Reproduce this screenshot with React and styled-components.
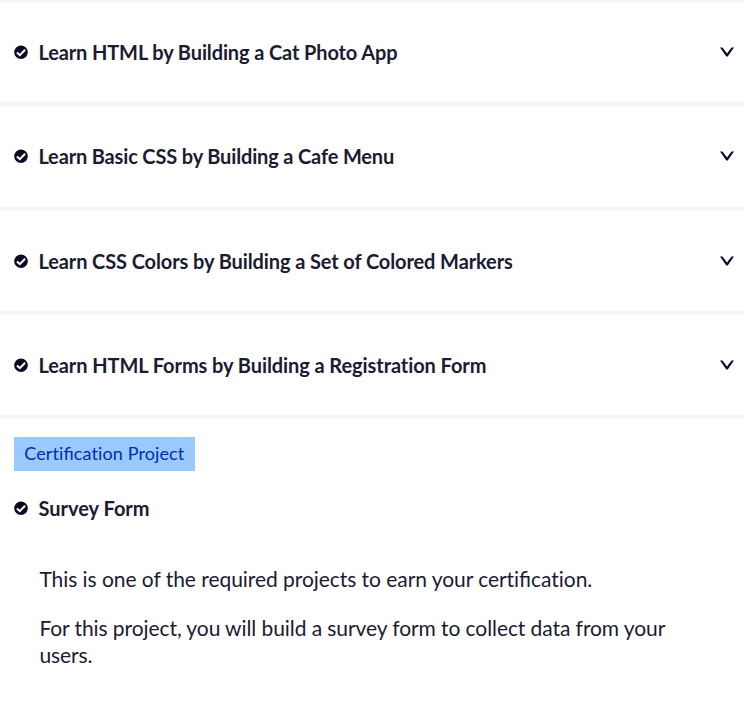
import React from "react";
import styled, { createGlobalStyle } from "styled-components";

const GlobalStyle = createGlobalStyle`
  * { box-sizing: border-box; }
  body { margin: 0; background: #f5f6f7; color: #1b1b32; font-family: Lato, sans-serif; }
`;

const Map = styled.main`
  display: flex;
  flex-direction: column;
  gap: 4px;
  padding-top: 2px;
  height: 706px;
  overflow: hidden;
`;

const Block = styled.section`
  display: flex;
  align-items: center;
  flex: 0 0 ${(p) => p.$height}px;
  padding: 0 10px ${(p) => p.$height - 100}px 14px;
  background: #fff;
`;

const Title = styled.h3`
  flex: 1;
  margin: 0 0 0 10.4px;
  font-size: 20px;
  line-height: 28px;
  font-weight: 700;
  font-variant-ligatures: none;
  letter-spacing: ${(p) => p.$spacing || 0}px;
  white-space: nowrap;
`;

const Project = styled.section`
  flex: 1;
  padding: 18px 14px 0;
  background: #fff;
`;

const Badge = styled.div`
  width: 181px;
  height: 34px;
  padding-left: 10.3px;
  background: #99c9ff;
  color: #002ead;
  font-size: 18px;
  line-height: 33px;
  letter-spacing: 0.11px;
  white-space: nowrap;
`;

const ProjectHeading = styled.div`
  display: flex;
  align-items: center;
  margin-top: 23px;
`;

const Description = styled.div`
  margin: 43px 0 0 25.4px;
  font-size: 21px;
  line-height: 27px;
`;

const Paragraph = styled.p`
  width: 650px;
  margin: 0 0 22px;
  letter-spacing: ${(p) => p.$spacing}px;
`;

const Ligature = styled.span`
  letter-spacing: 0;
`;

const Icon = styled.svg`
  display: block;
  flex: none;
`;

const ToggleIcon = styled(Icon)`
  margin-bottom: 1px;
`;

function Check() {
  return (
    <Icon width="14" height="14" viewBox="0 0 14 14">
      <circle cx="7" cy="7.2" r="6.8" fill="#0a0a23" />
      <path d="M2.9 7.5 5.8 10.1 11.1 4.7" fill="none" stroke="#fff" strokeWidth="2" />
    </Icon>
  );
}

function Chevron() {
  return (
    <ToggleIcon width="14" height="10" viewBox="0 0 14 10">
      <path d="M0 .5h2.5L7 6.5 11.5.5H14L7.7 9.5H6.3z" fill="#0a0a23" />
    </ToggleIcon>
  );
}

const blocks = [
  { title: "Learn HTML by Building a Cat Photo App", height: 100, spacing: -0.125 },
  { title: "Learn Basic CSS by Building a Cafe Menu", height: 101, spacing: -0.155 },
  { title: "Learn CSS Colors by Building a Set of Colored Markers", height: 100, spacing: -0.105 },
  { title: "Learn HTML Forms by Building a Registration Form", height: 100, spacing: -0.08 },
];

export default function App() {
  return (
    <>
      <GlobalStyle />
      <Map>
        {blocks.map((b) => (
          <Block key={b.title} $height={b.height}>
            <Check />
            <Title $spacing={b.spacing}>{b.title}</Title>
            <Chevron />
          </Block>
        ))}
        <Project>
          <Badge>Certi<Ligature>fi</Ligature>cation Project</Badge>
          <ProjectHeading>
            <Check />
            <Title>Survey Form</Title>
          </ProjectHeading>
          <Description>
            <Paragraph $spacing={-0.05}>
              This is one of the required projects to earn your certi<Ligature>fi</Ligature>cation.
            </Paragraph>
            <Paragraph $spacing={-0.08}>For this project, you will build a survey form to collect data from your users.</Paragraph>
          </Description>
        </Project>
      </Map>
    </>
  );
}
